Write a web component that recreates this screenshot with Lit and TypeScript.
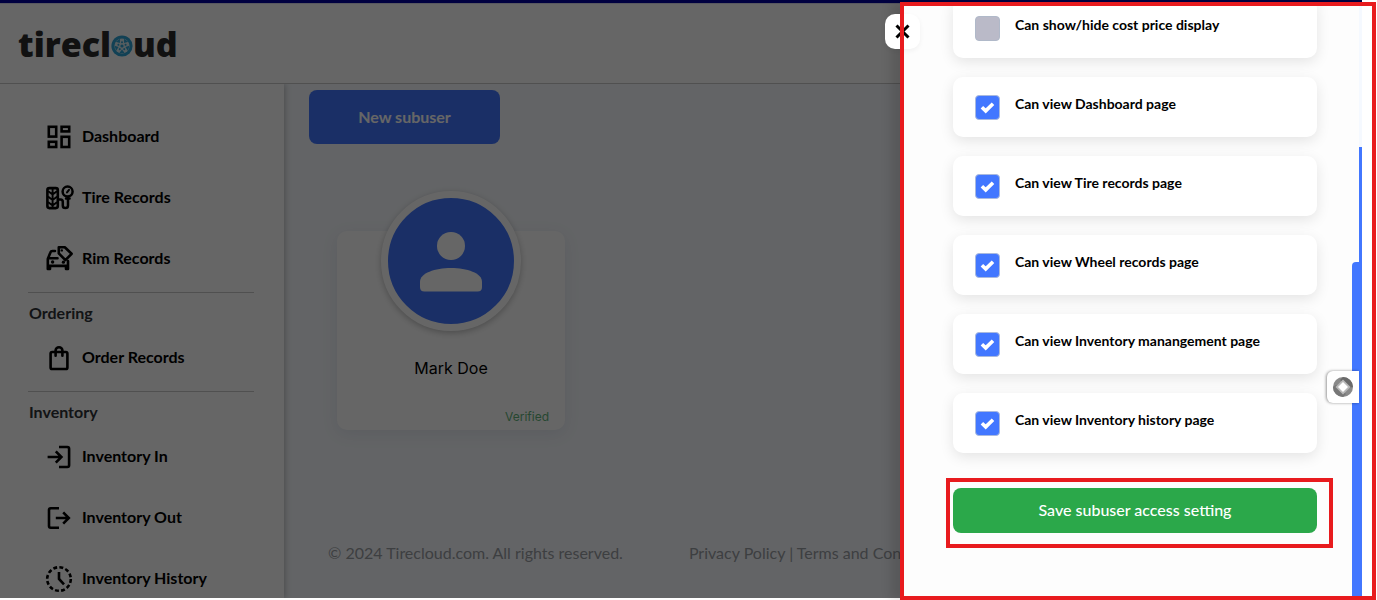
import { LitElement, html, css, svg, nothing } from "lit";
import { customElement, property, state } from "lit/decorators.js";

const icons: Record<string, unknown> = {
  dashboard: svg`<g fill="none" stroke="currentColor" stroke-width="2.6">
    <rect x="4.8" y="5.8" width="7.4" height="9.8"/><rect x="17.6" y="5.8" width="7.6" height="4.6"/>
    <rect x="4.8" y="20.8" width="7.4" height="5.2"/><rect x="17.6" y="15.8" width="7.6" height="10.2"/></g>`,
  tire: svg`<g fill="none" stroke="currentColor" stroke-linecap="round" stroke-linejoin="round">
    <rect x="3.4" y="6.1" width="10.4" height="20" rx="2" stroke-width="2.6"/>
    <path stroke-width="1.9" d="M8.600 7v18M4.600 9.500l4 3 4-3M4.600 15l4 3 4-3M4.600 20.500l4 3 4-3"/>
    <circle cx="23.6" cy="9.6" r="5" stroke-width="2.5"/>
    <path stroke-width="2" d="M23 10.400l2-2.600"/>
    <path stroke-width="2.5" d="M14.5 17.6h2q2.3 0 2.3 2.4v3.4a2.6 2.6 0 0 0 5.2 0V15M22 16.5h3.6"/></g>`,
  rim: svg`<g fill="none" stroke="currentColor" stroke-width="2.6" stroke-linecap="round" stroke-linejoin="round">
    <path d="M11 8H8.400q-1.500 0-2 1.400L3.800 16v10h2.200V23h16v3h2V18M4 15.300h9.500M4 22.800h20"/>
    <path d="M14.800 4.200h6l6.800 6.600-6.200 6.400-6.600-6.800z"/></g>
    <circle cx="17.8" cy="7.4" r="1.2" fill="currentColor"/><circle cx="8.6" cy="19" r="1.7" fill="currentColor"/>
    <circle cx="19.4" cy="19.2" r="1.6" fill="currentColor"/>`,
  bag: svg`<g fill="none" stroke="currentColor" stroke-width="2.6" stroke-linecap="round">
    <rect x="6.6" y="10" width="16.8" height="17" rx="1.6"/>
    <path d="M11.6 13.8V8.6a3.4 3.4 0 0 1 6.8 0v5.2"/></g>`,
  into: svg`<g fill="none" stroke="currentColor" stroke-width="2.6">
    <path d="M15 6h8.4q1.7 0 1.7 1.7v16.6q0 1.7-1.7 1.7H15M3.6 16h14M11.8 10.4l5.6 5.6-5.6 5.6"/></g>`,
  out: svg`<g fill="none" stroke="currentColor" stroke-width="2.6">
    <path d="M15 6.2H6.7Q5 6.2 5 7.9v16.2q0 1.7 1.7 1.7H15M11.8 16h13.4M19.2 10.4l5.6 5.6-5.6 5.6"/></g>`,
  history: svg`<g fill="none" stroke="currentColor" stroke-width="2.6">
    <circle cx="15" cy="16" r="11.8" stroke-dasharray="3.9 2.28"/><path d="M15 9v7l5 5.4"/></g>`,
};

@customElement("nav-item")
class NavItem extends LitElement {
  @property() icon = "";
  @property() label = "";
  static styles = css`
    :host { display: block; }
    .link { display: flex; align-items: center; gap: 8px; padding: 15px 16px 16px 44px; color: #000; text-decoration: none; font-weight: 700; line-height: 30px; }
    .icon { width: 30px; height: 30px; flex: none; }
  `;
  render() {
    return html`<a class="link" href="#"><svg class="icon" viewBox="0 0 30 30" aria-hidden="true">${icons[this.icon]}</svg><span>${this.label}</span></a>`;
  }
}

@customElement("access-option")
class AccessOption extends LitElement {
  @property() label = "";
  @property({ type: Boolean }) checked = false;
  static styles = css`
    :host { display: block; }
    .card { display: flex; align-items: flex-start; gap: 15px; height: 60px; box-sizing: border-box; padding: 18px 22px; background: #fff; border-radius: 10px; box-shadow: 0 4px 14px rgba(0, 0, 0, 0.1); }
    .tick { display: grid; flex: none; }
    .box, .mark { grid-area: 1 / 1; width: 25px; height: 25px; }
    .box { appearance: none; box-sizing: border-box; margin: 0; border: 1px solid #b0b9c9; border-radius: 4px; background: #babac8; }
    .box:checked { background: #4277ff; border-color: #a9b9de; }
    .mark { pointer-events: none; }
    .text { font-size: 14px; line-height: 18px; font-weight: 700; color: #000; }
  `;
  private toggle(e: Event) {
    this.checked = (e.target as HTMLInputElement).checked;
  }
  render() {
    return html`<div class="card">
      <span class="tick"><input class="box" id="box" type="checkbox" .checked=${this.checked} @change=${this.toggle} />
      ${this.checked ? html`<svg class="mark" viewBox="0 0 25 25" aria-hidden="true"><path d="M6.900 12.300l3.800 3.600 7.300-7.200" fill="none" stroke="#fff" stroke-width="3.600"/></svg>` : nothing}</span>
      <label class="text" for="box">${this.label}</label>
    </div>`;
  }
}

@customElement("app-root")
class AppRoot extends LitElement {
  @state() private options = [
    { label: "Can show/hide cost price display", on: false },
    { label: "Can view Dashboard page", on: true },
    { label: "Can view Tire records page", on: true },
    { label: "Can view Wheel records page", on: true },
    { label: "Can view Inventory manangement page", on: true },
    { label: "Can view Inventory history page", on: true },
  ];

  static styles = css`
    :host { display: block; position: relative; height: 100vh; overflow: hidden; background: #fff; font-family: Lato, sans-serif; font-size: 16px; }
    .page { position: relative; display: flex; flex-direction: column; height: calc(100vh - 2px); margin-right: 15px; overflow: hidden; }
    .strip { flex: none; height: 3px; background: #0000a0; }
    .header { flex: none; display: flex; align-items: center; height: 81px; box-sizing: border-box; padding: 0 18px; border-bottom: 1px solid #c8c8c8; border-top: 1px solid #dcdcf0; background: #fff; }
    .logo { display: flex; align-items: flex-end; font: 800 34px/42px "Open Sans", sans-serif; color: #2b2b2b; text-decoration: none; }
    .wheel { width: 22px; height: 22px; margin-bottom: 8px; }
    .body { flex: 1; min-height: 0; display: flex; overflow: hidden; }
    .sidebar { position: relative; flex: none; width: 284px; box-sizing: border-box; padding-top: 22px; background: #fff; box-shadow: 1px 0 6px rgba(0, 0, 0, 0.25); }
    .rule { height: 1px; margin: 3px 30px 0 28px; border: 0; background: #c8c8c8; }
    .group { margin: 0; padding: 6px 29px 0; font-size: 16px; line-height: 28px; font-weight: 700; color: #2f3237; }
    .main { flex: 1; min-width: 0; padding: 6px 25px 0; background: #f7fafe; }
    .new { display: block; width: 191px; height: 54px; padding: 0; border: 0; border-radius: 8px; background: #4277ff; color: #fff; font: 700 16px/24px Lato, sans-serif; }
    .user { display: flex; flex-direction: column; align-items: center; width: 228px; height: 199px; box-sizing: border-box; margin: 87px 0 0 28px; border-radius: 10px; background: #fff; box-shadow: 0 4px 16px rgba(60, 80, 130, 0.1); }
    .avatar { flex: none; width: 126px; height: 126px; margin-top: -40px; border: 7px solid #fff; border-radius: 50%; background: #4277ff; box-shadow: 0 2px 6px rgba(0, 0, 0, 0.25); }
    .name { margin: 25px 0 0; font: 400 16px/24px Inter, sans-serif; color: #000; }
    .status { align-self: flex-end; margin: 27px 16px 0; font: 400 12px/20px Inter, sans-serif; color: #5fb37c; }
    .footer { display: flex; gap: 66px; margin: 111px 0 0 19px; line-height: 24px; white-space: nowrap; color: #9a9da3; }
    .footer a { color: inherit; text-decoration: none; }
    .shade { position: absolute; inset: 0; background: rgba(0, 0, 0, 0.6); }
    .drawer { position: absolute; top: 3px; right: 15px; bottom: 0; width: 461px; box-sizing: border-box; display: flex; background: #fdfdfd; box-shadow: -10px 0 10px rgba(0, 0, 0, 0.12); }
    .scroll { flex: 1; min-width: 0; overflow: hidden; display: flex; flex-direction: column; justify-content: flex-end; gap: 19px; padding: 0 35px 67px 52px; }
    .save { flex: none; height: 45px; margin-top: 16px; padding: 0 0 2px; border: 0; border-radius: 8px; background: #2ba84a; color: #fff; font: 500 16px/24px Lato, sans-serif; }
    .inner-bar { width: 7px; margin-top: 259px; background: #4277ff; border-radius: 4px 0 0 0; }
    .outer-bar { width: 3px; padding-top: 144px; box-sizing: border-box; background: #f5f9ff; display: flex; }
    .thumb { flex: 1; background: #4277ff; }
    .close { position: absolute; top: 14px; right: 457px; width: 35px; height: 35px; padding: 0; border: 0; border-radius: 10px; background: #fff; box-shadow: 0 2px 5px rgba(0, 0, 0, 0.05); }
    .cross { display: block; width: 35px; height: 35px; }
    .widget { position: absolute; top: 371px; right: 18px; width: 32px; height: 32px; padding: 0; border: 0; border-radius: 6px 0 0 6px; background: #fff; box-shadow: -1px 0 3px rgba(0, 0, 0, 0.4); }
    .badge { display: block; width: 32px; height: 32px; }
    .frame { position: absolute; box-sizing: border-box; border: 4px solid #e81b1e; pointer-events: none; }
    .whole { top: 2px; right: 1px; bottom: 0; width: 476px; }
    .around { right: 44px; bottom: 52px; width: 387px; height: 70px; }
  `;

  render() {
    return html`
      <div class="page">
        <div class="strip"></div>
        <header class="header">
          <a class="logo" href="#" aria-label="tirecloud"><span>tirecl</span>
            <svg class="wheel" viewBox="0 0 22 22" aria-hidden="true">
              <circle cx="11" cy="11" r="10.6" fill="#2ea3d4"/>
              <circle cx="11" cy="11" r="7.6" fill="#d8e8ee"/>
              <g fill="#2ea3d4">${[0, 72, 144, 216, 288].map((a) => svg`<path d="M8.400 4h5.200L11 7.400z" transform="rotate(${a + 36} 11 11)"/><circle cx="11" cy="7.200" r="1" transform="rotate(${a} 11 11)"/>`)}
              <circle cx="11" cy="11" r="1.6"/></g>
            </svg><span>ud</span></a>
        </header>
        <div class="body">
          <nav class="sidebar">
            <nav-item icon="dashboard" label="Dashboard"></nav-item>
            <nav-item icon="tire" label="Tire Records"></nav-item>
            <nav-item icon="rim" label="Rim Records"></nav-item>
            <hr class="rule" />
            <h2 class="group">Ordering</h2>
            <nav-item icon="bag" label="Order Records"></nav-item>
            <hr class="rule" />
            <h2 class="group">Inventory</h2>
            <nav-item icon="into" label="Inventory In"></nav-item>
            <nav-item icon="out" label="Inventory Out"></nav-item>
            <nav-item icon="history" label="Inventory History"></nav-item>
          </nav>
          <main class="main">
            <button class="new">New subuser</button>
            <section class="user">
              <svg class="avatar" viewBox="0 0 126 126" aria-hidden="true">
                <circle cx="63" cy="48" r="14" fill="#fff"/>
                <path d="M32 89v-5C32 75 47 70 63 70s31 5 31 14v5q0 4.500-4.500 4.500h-53Q32 93.500 32 89z" fill="#fff"/>
              </svg>
              <p class="name">Mark Doe</p>
              <p class="status">Verified</p>
            </section>
            <footer class="footer">
              <span>© 2024 Tirecloud.com. All rights reserved.</span>
              <span><a href="#">Privacy Policy</a> | <a href="#">Terms and Conditions</a></span>
            </footer>
          </main>
        </div>
        <div class="shade"></div>
      </div>
      <aside class="drawer">
        <div class="scroll">
          ${this.options.map((o) => html`<access-option .label=${o.label} .checked=${o.on}></access-option>`)}
          <button class="save">Save subuser access setting</button>
        </div>
        <div class="inner-bar"></div>
        <div class="outer-bar"><div class="thumb"></div></div>
      </aside>
      <button class="close" aria-label="Close">
        <svg class="cross" viewBox="0 0 35 35" aria-hidden="true"><path d="M11.500 11.500l12 12M23.500 11.500l-12 12" stroke="#000" stroke-width="3"/></svg>
      </button>
      <button class="widget" aria-label="Assistant">
        <svg class="badge" viewBox="0 0 32 32" aria-hidden="true">
          <circle cx="16" cy="16" r="10" fill="#8a8a8a"/>
          <path d="M16 6a10 10 0 0 1 10 10l-5 1-8-8z" fill="#6a6a6a"/>
          <path d="M6 16A10 10 0 0 0 16 26l3-3-10-9z" fill="#777"/>
          <path d="M16 8.500l7.500 7.500-7.500 7.500L8.500 16z" fill="#b9b9b9"/>
          <path d="M16 11l5 5-5 5-5-5z" fill="#fff"/>
        </svg>
      </button>
      <div class="frame whole"></div>
      <div class="frame around"></div>
    `;
  }
}
